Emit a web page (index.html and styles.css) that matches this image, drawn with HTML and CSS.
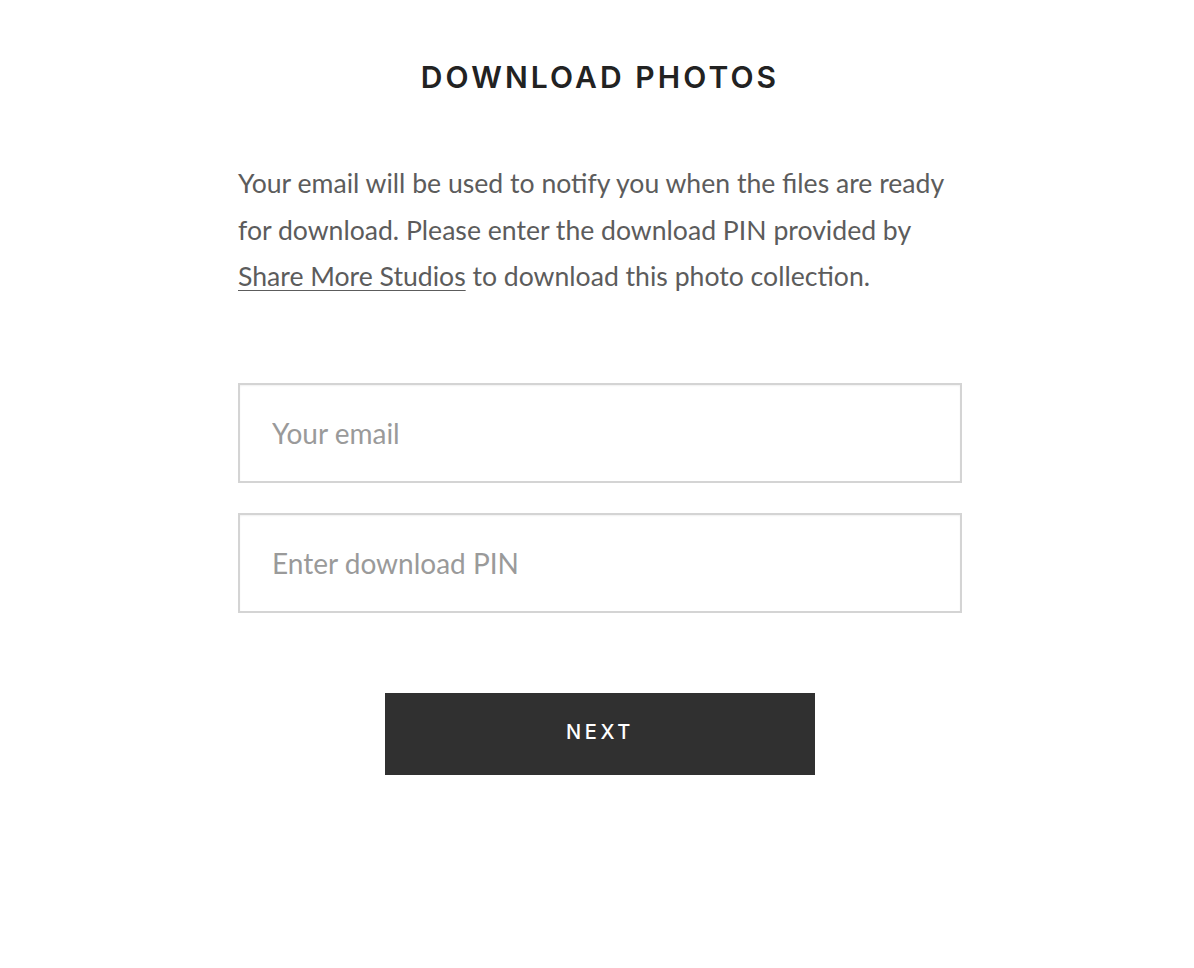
FILE: index.html
```html
<!DOCTYPE html>
<html lang="en">
<head>
<meta charset="utf-8">
<title>Download Photos</title>
<link rel="stylesheet" href="styles.css">
</head>
<body>
<main class="page">
  <h1 class="title">DOWNLOAD PHOTOS</h1>
  <p class="intro">Your email will be used to notify you when the files are ready for download. Please enter the download PIN provided by <a class="studio" href="#">Share More Studios</a> to download this photo collection.</p>
  <form class="form">
    <input class="field" type="email" placeholder="Your email">
    <input class="field" type="text" placeholder="Enter download PIN">
    <div class="actions">
      <button class="next" type="button">NEXT</button>
    </div>
  </form>
</main>
</body>
</html>
```
FILE: styles.css
```css
html, body {
  margin: 0;
  padding: 0;
  background: #ffffff;
}
body {
  font-family: Lato, "Liberation Sans", sans-serif;
  padding-left: 6px;
}
.page {
  width: 724px;
  margin: 0 auto;
  padding-top: 58px;
}
.title {
  margin: 0;
  text-align: center;
  font-family: Inter, "Liberation Sans", sans-serif;
  font-weight: 600;
  font-size: 30px;
  line-height: 38px;
  letter-spacing: 3.1px;
  color: #222222;
}
.intro {
  margin: 64px 0 0;
  font-size: 26.6px;
  line-height: 46.5px;
  color: #5c5c5c;
}
.studio {
  color: #5c5c5c;
  text-decoration: underline;
  text-underline-offset: 4px;
  text-decoration-thickness: 1px;
}
.form {
  margin-top: 83px;
  display: flex;
  flex-direction: column;
  gap: 30px;
}
.field {
  box-sizing: border-box;
  width: 100%;
  height: 100px;
  margin: 0;
  padding: 0 32px;
  border: 2px solid #d4d4d4;
  border-radius: 0;
  box-shadow: inset 0 1px 2px rgba(0,0,0,0.06);
  font-family: Lato, "Liberation Sans", sans-serif;
  font-size: 28px;
  color: #333;
  background: #fff;
  outline: none;
}
.field::placeholder {
  color: #9a9a9a;
}
.actions {
  display: flex;
  justify-content: center;
  margin-top: 50px;
}
.next {
  width: 430px;
  height: 82px;
  padding: 0 0 3px;
  border: 0;
  border-radius: 0;
  background: #303030;
  color: #ffffff;
  font-family: Inter, "Liberation Sans", sans-serif;
  font-weight: 500;
  font-size: 20px;
  letter-spacing: 3.6px;
  cursor: pointer;
}
```
